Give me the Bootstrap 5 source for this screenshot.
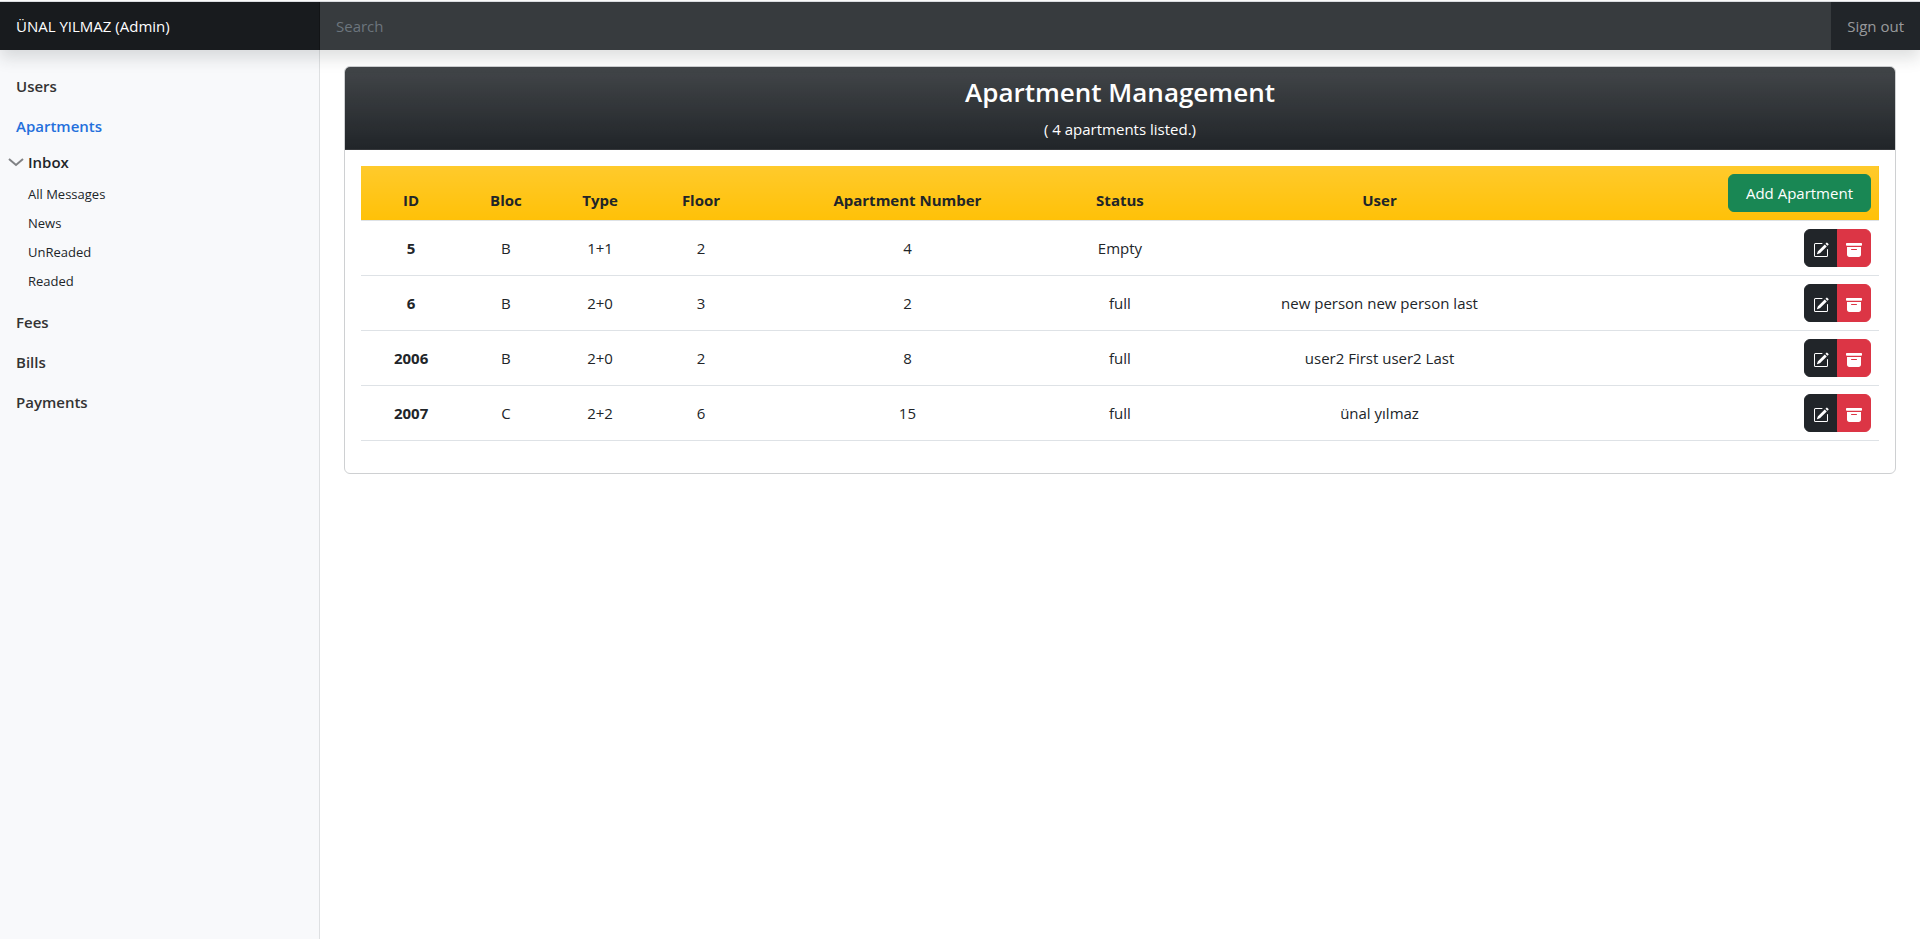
<!DOCTYPE html>
<html lang="en">
<head>
<meta charset="utf-8">
<meta name="viewport" content="width=device-width, initial-scale=1">
<title>Apartment Management</title>
<link href="https://cdn.jsdelivr.net/npm/bootstrap@5.3.0/dist/css/bootstrap.min.css" rel="stylesheet">
<style>
  body {
    font-family: "Open Sans", "Noto Sans", sans-serif;
    font-size: 15px;
    line-height: 24px;
    color: #212529;
    padding-top: 1px;
    min-height: 100vh;
  }
  .btn, .form-control { font-size: 15px; line-height: 24px; }

  .topbar { border-top: 1px solid #dadce0; height: 49px; z-index: 10; }
  .topbar-brand {
    color: #fff;
    font-weight: 500;
    background: rgba(0, 0, 0, .25);
    box-shadow: inset -1px 0 0 rgba(0, 0, 0, .25);
  }
  .topbar .form-control,
  .topbar .form-control:focus {
    color: #fff;
    background: rgba(255, 255, 255, .1);
    box-shadow: none;
  }
  .topbar .form-control::placeholder { color: #6c757d; opacity: 1; }
  .topbar-link { color: rgba(255, 255, 255, .55); font-weight: 500; padding: 0 16px; }

  .sidebar { background: #f8f9fb; box-shadow: inset -1px 0 0 #dee0e2; padding-top: 16px; }
  .sidebar .nav-link { color: #333; font-weight: 600; padding: 8px 16px; }
  .sidebar .nav-link.active { color: #2470dc; }
  .inbox-toggle { color: #212529; font-weight: 600; padding: 4px 8px; gap: 4px; }
  .inbox-items { font-size: 13px; line-height: 21px; padding: 2px 0 6px; }
  .inbox-items a { color: #212529; padding: 4px 28px; }

  .panel { border-color: #ced0d2; margin-top: 16px; }
  .panel-title { font-size: 26px; line-height: 34px; font-weight: 600; }
  .list-head { background-image: linear-gradient(180deg, rgba(255, 255, 255, .15), rgba(255, 255, 255, 0)); }
  .list-head .btn { padding: 6px 17px; }
  .apartments { --bs-table-bg: transparent; table-layout: fixed; }
  .apartments > :not(caption) > * > * { border-color: #dee2e6; }
  .apartments .list-head th { vertical-align: bottom; }
  .w-id { width: 6.6%; }
  .w-bloc { width: 5.9%; }
  .w-type { width: 6.5%; }
  .w-floor { width: 6.8%; }
  .w-number { width: 20.4%; }
  .w-status { width: 7.6%; }
  .w-user { width: 26.6%; }
  .icon { width: 16px; height: 16px; fill: currentColor; vertical-align: -4px; }
</style>
</head>
<body class="d-flex flex-column">

<svg class="d-none" aria-hidden="true">
  <symbol id="pencil-square" viewBox="0 0 16 16">
    <path d="M15.502 1.94a.5.5 0 0 1 0 .706L14.459 3.69l-2-2L13.502.646a.5.5 0 0 1 .707 0l1.293 1.293zm-1.75 2.456-2-2L4.939 9.21a.5.5 0 0 0-.121.196l-.805 2.414a.25.25 0 0 0 .316.316l2.414-.805a.5.5 0 0 0 .196-.12l6.813-6.814z"/>
    <path fill-rule="evenodd" d="M1 13.5A1.5 1.5 0 0 0 2.5 15h11a1.5 1.5 0 0 0 1.5-1.5v-6a.5.5 0 0 0-1 0v6a.5.5 0 0 1-.5.5h-11a.5.5 0 0 1-.5-.5v-11a.5.5 0 0 1 .5-.5H9a.5.5 0 0 0 0-1H2.5A1.5 1.5 0 0 0 1 2.5v11z"/>
  </symbol>
  <symbol id="archive-fill" viewBox="0 0 16 16">
    <path d="M12.643 15C13.979 15 15 13.845 15 12.5V5H1v7.500C1 13.845 2.021 15 3.357 15h9.286zM5.500 7h5a.5.5 0 0 1 0 1h-5a.5.5 0 0 1 0-1zM.8 1a.8.8 0 0 0-.8.8V3a.8.8 0 0 0 .8.8h14.400A.8.8 0 0 0 16 3V1.800a.8.8 0 0 0-.8-.8H.8z"/>
  </symbol>
  <symbol id="chevron" viewBox="0 0 16 16">
    <path d="M1 5l7 6 7-6" fill="none" stroke="#808285" stroke-width="2"/>
  </symbol>
</svg>

<header class="topbar bg-dark d-flex align-items-stretch shadow sticky-top">
  <a class="topbar-brand col-2 px-3 d-flex align-items-center text-decoration-none" href="#">ÜNAL YILMAZ (Admin)</a>
  <input class="form-control border-0 rounded-0 px-3 flex-fill" type="text" placeholder="Search" aria-label="Search">
  <a class="topbar-link d-flex align-items-center text-nowrap text-decoration-none" href="#">Sign out</a>
</header>

<div class="container-fluid flex-grow-1 d-flex">
  <div class="row flex-grow-1">
    <nav class="sidebar col-2 px-0" aria-label="Main">
      <ul class="nav flex-column">
        <li><a class="nav-link" href="#">Users</a></li>
        <li><a class="nav-link active" aria-current="page" href="#">Apartments</a></li>
        <li>
          <button class="inbox-toggle btn border-0 d-flex align-items-center" type="button" data-bs-toggle="collapse" data-bs-target="#inbox" aria-expanded="true" aria-controls="inbox">
            <svg class="icon" aria-hidden="true"><use href="#chevron"/></svg>Inbox
          </button>
          <div class="collapse show" id="inbox">
            <ul class="inbox-items list-unstyled mb-0">
              <li><a class="d-block text-decoration-none" href="#">All Messages</a></li>
              <li><a class="d-block text-decoration-none" href="#">News</a></li>
              <li><a class="d-block text-decoration-none" href="#">UnReaded</a></li>
              <li><a class="d-block text-decoration-none" href="#">Readed</a></li>
            </ul>
          </div>
        </li>
        <li><a class="nav-link" href="#">Fees</a></li>
        <li><a class="nav-link" href="#">Bills</a></li>
        <li><a class="nav-link" href="#">Payments</a></li>
      </ul>
    </nav>

    <main class="col-10 px-4">
      <div class="panel card">
        <div class="card-header bg-dark bg-gradient text-white text-center">
          <h1 class="panel-title mb-2">Apartment Management</h1>
          <div>( 4 apartments listed.)</div>
        </div>
        <div class="card-body">
          <table class="apartments table text-center align-middle">
            <thead class="list-head bg-warning">
              <tr>
                <th class="w-id" scope="col">ID</th>
                <th class="w-bloc" scope="col">Bloc</th>
                <th class="w-type" scope="col">Type</th>
                <th class="w-floor" scope="col">Floor</th>
                <th class="w-number" scope="col">Apartment Number</th>
                <th class="w-status" scope="col">Status</th>
                <th class="w-user" scope="col">User</th>
                <th class="text-end" scope="col"><button class="btn btn-success" type="button">Add Apartment</button></th>
              </tr>
            </thead>
            <tbody>
              <tr>
                <th scope="row">5</th><td>B</td><td>1+1</td><td>2</td><td>4</td><td>Empty</td><td></td>
                <td class="text-end"><div class="btn-group">
                  <button class="btn btn-dark px-2" type="button" aria-label="Edit"><svg class="icon"><use href="#pencil-square"/></svg></button>
                  <button class="btn btn-danger px-2" type="button" aria-label="Archive"><svg class="icon"><use href="#archive-fill"/></svg></button>
                </div></td>
              </tr>
              <tr>
                <th scope="row">6</th><td>B</td><td>2+0</td><td>3</td><td>2</td><td>full</td><td>new person new person last</td>
                <td class="text-end"><div class="btn-group">
                  <button class="btn btn-dark px-2" type="button" aria-label="Edit"><svg class="icon"><use href="#pencil-square"/></svg></button>
                  <button class="btn btn-danger px-2" type="button" aria-label="Archive"><svg class="icon"><use href="#archive-fill"/></svg></button>
                </div></td>
              </tr>
              <tr>
                <th scope="row">2006</th><td>B</td><td>2+0</td><td>2</td><td>8</td><td>full</td><td>user2 First user2 Last</td>
                <td class="text-end"><div class="btn-group">
                  <button class="btn btn-dark px-2" type="button" aria-label="Edit"><svg class="icon"><use href="#pencil-square"/></svg></button>
                  <button class="btn btn-danger px-2" type="button" aria-label="Archive"><svg class="icon"><use href="#archive-fill"/></svg></button>
                </div></td>
              </tr>
              <tr>
                <th scope="row">2007</th><td>C</td><td>2+2</td><td>6</td><td>15</td><td>full</td><td>ünal yılmaz</td>
                <td class="text-end"><div class="btn-group">
                  <button class="btn btn-dark px-2" type="button" aria-label="Edit"><svg class="icon"><use href="#pencil-square"/></svg></button>
                  <button class="btn btn-danger px-2" type="button" aria-label="Archive"><svg class="icon"><use href="#archive-fill"/></svg></button>
                </div></td>
              </tr>
            </tbody>
          </table>
        </div>
      </div>
    </main>
  </div>
</div>

<script src="https://cdn.jsdelivr.net/npm/bootstrap@5.3.0/dist/js/bootstrap.bundle.min.js"></script>
</body>
</html>
